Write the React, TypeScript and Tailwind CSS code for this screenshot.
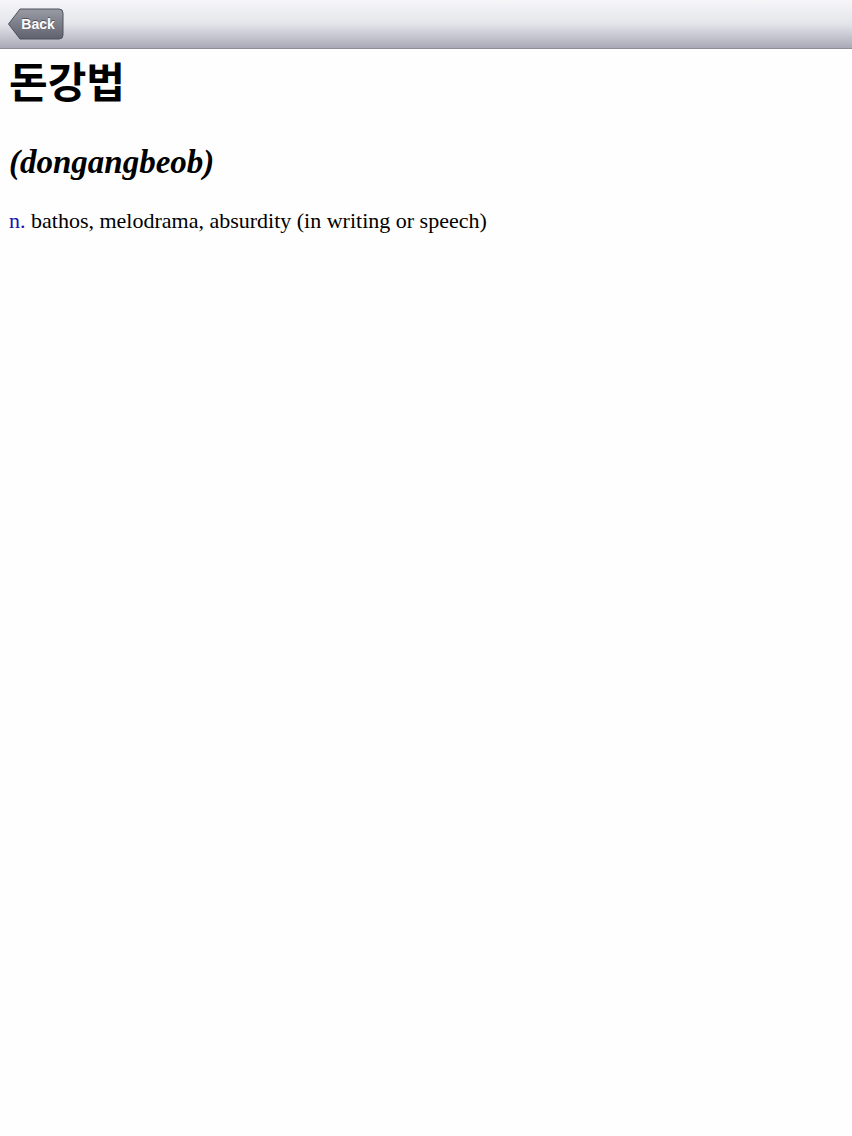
export default function App() {
    return (
        <div className="min-h-[1136px] w-full bg-[#fefefe]">
            {/* toolbar */}
            <div className="flex h-[49px] items-center border-b border-[#8d8e99] bg-gradient-to-b from-[#f6f6f9] via-[#e4e5ea] to-[#a9aab7] px-2">
                <button className="relative flex h-[32px] items-center">
                    <svg width="56" height="32" viewBox="0 0 56 32" className="absolute left-0 top-0">
                        <defs>
                            <linearGradient id="backg" x1="0" y1="0" x2="0" y2="1">
                                <stop offset="0" stopColor="#9a9ca5" />
                                <stop offset="0.5" stopColor="#7b7e88" />
                                <stop offset="1" stopColor="#5f626c" />
                            </linearGradient>
                        </defs>
                        <path
                            d="M0.5 16 L12 1 L51 1 Q55 1 55 5 L55 27 Q55 31 51 31 L12 31 Z"
                            fill="url(#backg)"
                            stroke="#4f525c"
                            strokeWidth="1"
                        />
                    </svg>
                    <span
                        className="relative w-[56px] pl-[4px] text-center text-[14px] font-bold text-white [text-shadow:0_-1px_0_rgba(0,0,0,0.4)]"
                        style={{ fontFamily: '"Liberation Sans", Arial, sans-serif' }}
                    >
                        Back
                    </span>
                </button>
            </div>

            <div className="px-[9px]" style={{ fontFamily: '"Liberation Serif", "Times New Roman", serif' }}>
                <h1
                    className="mt-[1px] text-[42px] font-bold leading-[60px] text-black"
                    style={{ fontFamily: '"Noto Sans CJK KR", "Noto Sans", sans-serif' }}
                >
                    돈강법
                </h1>
                <h2 className="mt-[32px] text-[33px] font-bold italic leading-[40px] text-black">(dongangbeob)</h2>
                <p className="mt-[25px] text-[22px] leading-[28px] text-black">
                    <span className="text-[#1b11b4]">n.</span> bathos, melodrama, absurdity (in writing or speech)
                </p>
            </div>
        </div>
    );
}
